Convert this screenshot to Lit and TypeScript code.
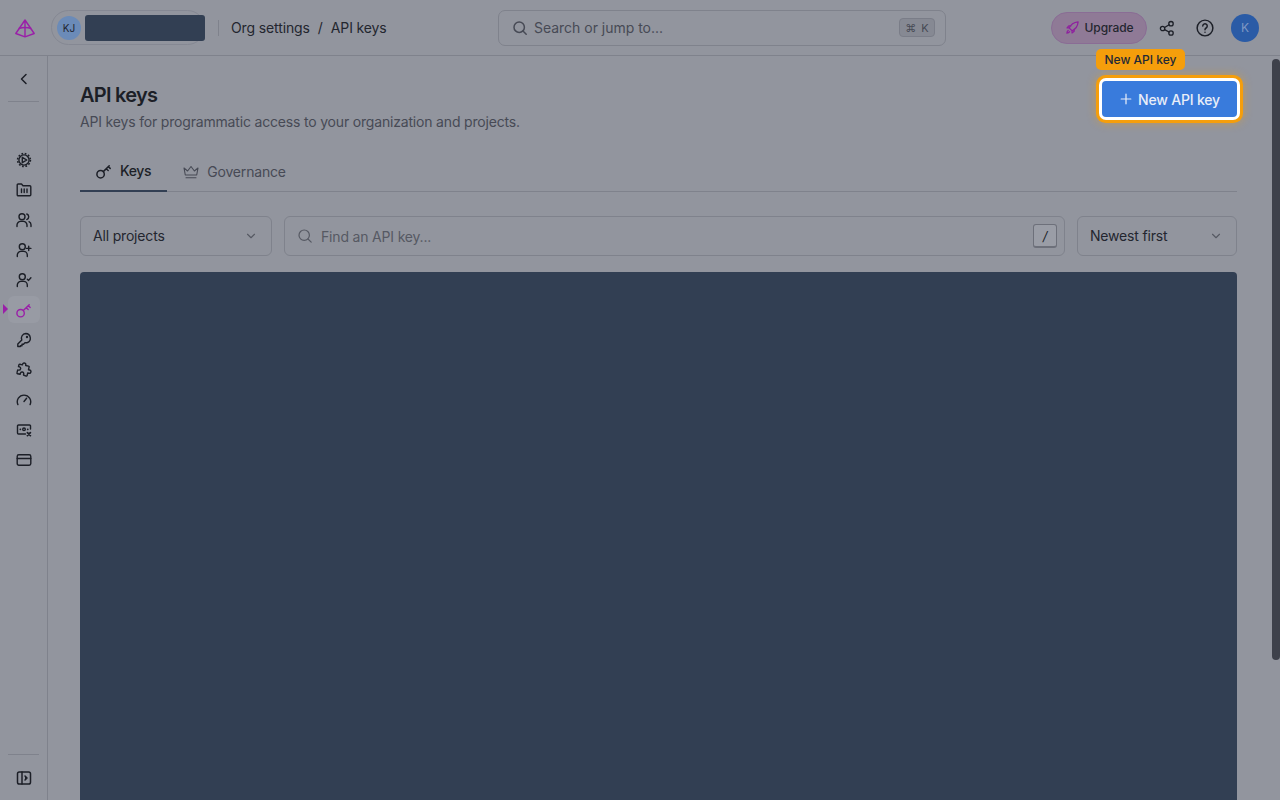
import { LitElement, html, css, svg } from "lit";
import { customElement } from "lit/decorators.js";

const ic = (body: unknown, size = 16, sw = 1.5) => html`<svg width=${size} height=${size} viewBox="0 0 16 16" fill="none" stroke="currentColor" stroke-width=${sw} stroke-linecap="round" stroke-linejoin="round">${body}</svg>`;

const keyIcon = svg`<circle cx="4.6" cy="11.2" r="3.7"/><path d="M7.3 8.6 13.2 2.800M10.200 5.700l2 1.800M12.300 3.700l1.900 1.700"/>`;
const searchIcon = svg`<circle cx="7.2" cy="7.2" r="5.2"/><path d="m11 11 3.2 3.2"/>`;
const chevron = svg`<path d="m4 6 4 4 4-4"/>`;

const sideIcons = [
  svg`<circle cx="8" cy="8" r="5.100"/><circle cx="8" cy="8" r="6.400" stroke-width="1.600" stroke-dasharray="1.700 1.650" stroke-linecap="butt"/><path d="M6.300 5.300v5.400L10.800 8z"/>`,
  svg`<path d="M1.200 3a1 1 0 0 1 1-1h3.300l1.500 1.800h6.800a1 1 0 0 1 1 1v8a1 1 0 0 1-1 1H2.200a1 1 0 0 1-1-1z"/><path d="M5.500 7v3.500M8.200 7v3.500M11 7v3.500"/>`,
  svg`<circle cx="6" cy="4.800" r="3"/><path d="M1 14.500v-1.500a3.600 3.600 0 0 1 3.600-3.600h2.800a3.600 3.600 0 0 1 3.600 3.600v1.500M10.800 2a3 3 0 0 1 0 5.600M13 9.700a3.400 3.400 0 0 1 2 3.100v1.700"/>`,
  svg`<circle cx="6.300" cy="4.800" r="3"/><path d="M1.300 14.500v-1.500a3.600 3.600 0 0 1 3.600-3.600h2.800a3.600 3.600 0 0 1 3.600 3.600v1.500M12.700 4.200v4.400M10.500 6.400h4.400"/>`,
  svg`<circle cx="6.300" cy="4.800" r="3"/><path d="M1.300 14.500v-1.500a3.600 3.600 0 0 1 3.600-3.600h2.800a3.600 3.600 0 0 1 3.600 3.600v1.500M11.300 7.200l1.300 1.200 2.300-2.600"/>`,
  keyIcon,
  svg`<path d="M9.800 1.500a4.700 4.700 0 0 1 1.700 9 4.600 4.600 0 0 1-2.500.1l-1.500 1.700H6v1.500H4.400v.7H1.800v-2.400l4-4a4.700 4.700 0 0 1 4-6.600z"/><circle cx="11" cy="5" r=".5"/>`,
  svg`<path d="M6.500 2.500a1.700 1.700 0 0 1 3.300-.4l-.1 1.400 2.800.6a.8.8 0 0 1 .6 1l-.6 2.600 1.200.3a1.700 1.700 0 0 1-.8 3.300l-1.200-.3-.6 2.500a.8.8 0 0 1-1 .6L7.500 13l.2-1a1.700 1.700 0 0 0-3.300-.8l-.3 1.100-2.500-.6a.8.8 0 0 1-.6-1l.7-2.800.9.200a1.700 1.700 0 0 0 .8-3.300l-.9-.2.400-1.700a.8.8 0 0 1 1-.6l2.500.6z"/>`,
  svg`<path d="M1.900 12.600a6.700 6.700 0 1 1 12.200 0"/><path d="m8 9.500 2.600-3.200"/>`,
  svg`<path d="M14.500 7V4a1 1 0 0 0-1-1h-11a1 1 0 0 0-1 1v7a1 1 0 0 0 1 1h7"/><circle cx="8" cy="7.300" r="1.300"/><path d="M4.300 7.300h.1M11.700 7.300h.1M11.400 10.600l3 3M14.400 10.600l-3 3" stroke-width="1.700"/>`,
  svg`<rect x="1.200" y="2.800" width="13.600" height="10.400" rx="1.600"/><path d="M1.200 6.500h13.600"/>`,
];

@customElement("app-root")
export class AppRoot extends LitElement {
  static styles = css`
    :host { display: block; width: 1280px; height: 800px; overflow: hidden; background: #92959e; color: #1c1f27; font-family: Inter, "Liberation Sans", sans-serif; font-size: 14px; letter-spacing: -0.18px; }
    .header { height: 55px; border-bottom: 1px solid #7f828c; display: flex; align-items: center; padding: 0 21px 0 15px; position: relative; }
    .logo { width: 20px; height: 20px; color: #9a1fa8; margin-right: 16px; display: flex; }
    .workspace { display: flex; align-items: center; width: 154px; height: 35px; box-sizing: border-box; border: 1px solid #858893; border-radius: 18px; padding: 0 5px; gap: 4px; flex: none; }
    .avatar { width: 24px; height: 24px; flex: none; border-radius: 50%; background: #6b8bb8; font-size: 10px; font-weight: 400; color: #1f2530; display: flex; align-items: center; justify-content: center; letter-spacing: 0; }
    .redact { background: #323f53; }
    .wsname { width: 120px; height: 26px; flex: none; border-radius: 3px; }
    .sep { width: 1px; height: 16px; background: #7f828c; margin: 0 12px 0 13px; }
    .crumbs { display: flex; gap: 8px; color: #23262f; font-size: 14px; width: 267px; white-space: nowrap; letter-spacing: -0.12px; }
    .search { width: 448px; height: 36px; box-sizing: border-box; border: 1px solid #7f828c; border-radius: 7px; display: flex; align-items: center; padding: 0 10px 0 13px; gap: 6px; color: #474a55; letter-spacing: -0.02px; }
    .kbd { margin-left: auto; display: flex; align-items: center; justify-content: center; width: 34px; height: 17px; border: 1px solid #7a7d88; border-radius: 4px; background: #868993; font-size: 11px; gap: 5px; color: #474a55; letter-spacing: 0; }
    .right { margin-left: auto; display: flex; align-items: center; }
    .upgrade { width: 96px; height: 32px; box-sizing: border-box; display: flex; align-items: center; justify-content: center; gap: 5px; border-radius: 16px; background: #8f7a96; border: 1px solid #8a6d95; font-size: 12px; font-weight: 500; color: #23262f; letter-spacing: -0.1px; }
    .upgrade svg { color: #8f1f9f; }
    .hicon { margin-left: 12px; display: flex; color: #1c1f27; }
    .hicon.help { margin-left: 21px; }
    .user { margin-left: 17px; width: 28px; height: 28px; border-radius: 50%; background: #2a5ba6; color: #7f98c4; display: flex; align-items: center; justify-content: center; font-size: 12px; letter-spacing: 0; }
    .body { display: flex; height: 744px; }
    .side { width: 47px; border-right: 1px solid #7f828c; display: flex; flex-direction: column; align-items: center; flex: none; }
    .back { height: 46px; width: 31px; flex: none; display: flex; align-items: center; justify-content: center; border-bottom: 1px solid #7f828c; color: #1c1f27; box-sizing: border-box; margin-bottom: 43px; }
    .items { display: flex; flex-direction: column; }
    .item { width: 32px; height: 30px; display: flex; align-items: center; justify-content: center; color: #1c1f27; position: relative; border-radius: 6px; }
    .item.on { background: #989ba4; color: #9a1fa8; height: 27px; margin: 1px 0 2px; }
    .item.on::before { content: ""; position: absolute; left: -5px; top: 8px; border-left: 5px solid #9a1fa8; border-top: 5px solid transparent; border-bottom: 5px solid transparent; }
    .foot { margin-top: auto; width: 31px; height: 46px; flex: none; border-top: 1px solid #7f828c; display: flex; align-items: center; justify-content: center; color: #1c1f27; box-sizing: border-box; }
    .main { flex: 1; padding: 25px 35px 0 32px; box-sizing: border-box; height: 744px; min-width: 0; }
    .bar { width: 8px; flex: none; background: #92959e; padding-top: 3px; }
    .thumb { height: 601px; width: 8px; border-radius: 4px; background: #3e414b; }
    .top { display: flex; justify-content: space-between; }
    h1 { margin: 1px 0 0; font-size: 20px; line-height: 26px; font-weight: 600; color: #1c1f27; letter-spacing: -0.75px; }
    .sub { margin-top: 4px; color: #474a55; font-size: 14px; line-height: 20px; }
    .cta { position: relative; width: 135px; height: 36px; border-radius: 4px; background: #397bdc; color: #e9eef8; display: flex; align-items: center; justify-content: center; gap: 5px; font-size: 14px; font-weight: 500; box-shadow: 0 0 0 3px #fff, 0 0 0 6px #f59e0b, 0 0 10px 6px rgba(245,158,11,.45); }
    .tip { position: absolute; left: -6px; top: -32px; height: 21px; width: 89px; display: flex; align-items: center; justify-content: center; background: #f59e0b; border-radius: 5px; color: #1f2937; font-size: 12px; font-weight: 500; white-space: nowrap; letter-spacing: 0; }
    .tabs { margin-top: 19px; height: 40px; display: flex; border-bottom: 1px solid #7f828c; }
    .tab { display: flex; align-items: center; gap: 8px; padding: 0 16px; color: #474a55; box-sizing: border-box; height: 41px; }
    .tab.on { color: #1c1f27; font-weight: 500; border-bottom: 2px solid #323f53; letter-spacing: -0.35px; }
    .filters { margin-top: 24px; display: flex; gap: 12px; }
    .field { height: 40px; box-sizing: border-box; border: 1px solid #7f828c; border-radius: 6px; display: flex; align-items: center; padding: 0 12px; color: #23262f; }
    .field svg { flex: none; }
    .field > span:first-child { margin-top: -2px; }
    .proj { width: 192px; justify-content: space-between; }
    .find { flex: 1; gap: 8px; color: #565963; padding-right: 7px; }
    .slash { margin-left: auto; width: 24px; height: 24px; box-sizing: border-box; border: 1px solid #6d707a; border-bottom-width: 2px; border-radius: 3px; background: #9a9da6; display: flex; align-items: center; justify-content: center; font-style: italic; color: #1c1f27; font-size: 13px; }
    .sort { width: 160px; justify-content: space-between; }
    .chev { color: #565963; display: flex; margin-right: 1px; }
    .block { margin-top: 16px; height: 600px; border-radius: 4px 4px 0 0; }
  `;

  render() {
    return html`
      <div class="header">
        <div class="logo"><svg width="20" height="20" viewBox="0 0 20 20" fill="none" stroke="currentColor" stroke-width="1.400" stroke-linejoin="round"><path d="M10 2 .8 15.500 10 18.800l9.200-3.300zM10 2v16.800"/><path d="M3.800 10.500c4-1.200 8.400-1.200 12.400 0"/></svg></div>
        <div class="workspace"><div class="avatar">KJ</div><div class="wsname redact"></div></div>
        <div class="sep"></div>
        <div class="crumbs"><span>Org settings</span><span>/</span><span>API keys</span></div>
        <div class="search">${ic(searchIcon)}<span>Search or jump to...</span><span class="kbd"><span>⌘</span><span>K</span></span></div>
        <div class="right">
          <div class="upgrade">${ic(svg`<path d="M6 10 4.500 8.500C6 5 9 2.500 14 2c-.5 5-3 8-6.500 9.500zM4.500 8.500H2.200L4 6.200h2.400M7.500 11.500v2.300L9.800 12V9.600M3.500 11c-1 .7-1.500 1.700-1.500 3 1.300 0 2.300-.5 3-1.500"/>`, 15, 1.3)}<span>Upgrade</span></div>
          <div class="hicon">${ic(svg`<circle cx="3.600" cy="8.500" r="2.200"/><circle cx="12" cy="3.700" r="2.200"/><circle cx="12" cy="13" r="2.200"/><path d="m5.600 7.500 4.500-2.700M5.600 9.600l4.500 2.400"/>`, 16, 1.3)}</div>
          <div class="hicon help">${ic(svg`<circle cx="8" cy="8" r="7"/><path d="M6 6.200a2 2 0 1 1 3 1.800c-.7.400-1 .8-1 1.500M8 11.700h.01"/>`, 18, 1.3)}</div>
          <div class="user">K</div>
        </div>
      </div>
      <div class="body">
        <div class="side">
          <div class="back">${ic(svg`<path d="M10 3.500 5.500 8l4.500 4.500"/>`)}</div>
          <div class="items">
            ${sideIcons.map((b, i) => html`<div class="item ${i === 5 ? "on" : ""}">${ic(b, 16, 1.4)}</div>`)}
          </div>
          <div class="foot">${ic(svg`<rect x="1.500" y="2" width="13" height="12" rx="1.800"/><path d="M6 2v12"/><path d="m9 6 2 2-2 2" fill="currentColor"/>`)}</div>
        </div>
        <div class="main">
          <div class="top">
            <div><h1>API keys</h1><div class="sub">API keys for programmatic access to your organization and projects.</div></div>
            <div class="cta">
              <div class="tip">New API key</div>
              ${ic(svg`<path d="M8 2.500v11M2.500 8h11"/>`, 14, 1.4)}<span>New API key</span>
            </div>
          </div>
          <div class="tabs">
            <div class="tab on">${ic(keyIcon)}<span>Keys</span></div>
            <div class="tab">${ic(svg`<path d="M1 4 4.600 7 8 2.500 11.400 7 15 4l-1.300 7H2.300zM3 13.800h10"/>`, 16, 1.1)}<span>Governance</span></div>
          </div>
          <div class="filters">
            <div class="field proj"><span>All projects</span><span class="chev">${ic(chevron, 14, 1.3)}</span></div>
            <div class="field find">${ic(searchIcon, 16, 1.2)}<span>Find an API key...</span><span class="slash">/</span></div>
            <div class="field sort"><span>Newest first</span><span class="chev">${ic(chevron, 14, 1.3)}</span></div>
          </div>
          <div class="block redact"></div>
        </div>
        <div class="bar"><div class="thumb"></div></div>
      </div>
    `;
  }
}
